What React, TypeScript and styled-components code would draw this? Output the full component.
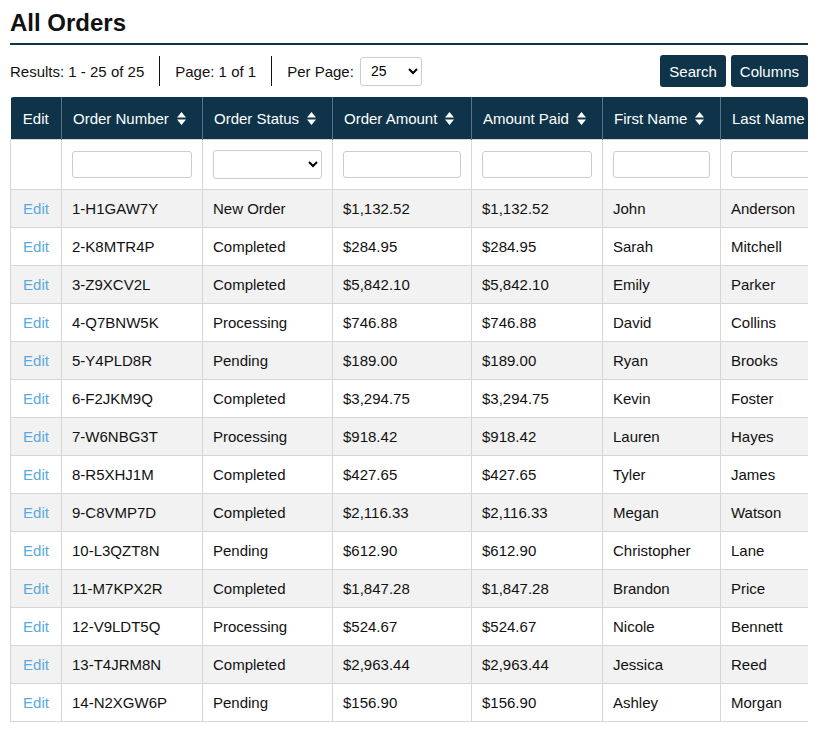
import React from 'react';
import styled, { createGlobalStyle } from 'styled-components';

const Global = createGlobalStyle`
  body { margin: 0; font-family: "Liberation Sans", Arial, sans-serif; color: #111; background: #fff; }
`;

const Page = styled.div`
  padding: 8px 10px 0;
`;

const Title = styled.h1`
  margin: 0;
  font-size: 24px;
  font-weight: 700;
  line-height: 30px;
  padding-bottom: 5px;
  border-bottom: 2px solid #0f3449;
`;

const Toolbar = styled.div`
  display: flex;
  align-items: center;
  margin-top: 10px;
  height: 32px;
`;

const Info = styled.div`
  display: flex;
  align-items: center;
  font-size: 15px;
  padding: 0 15px;
  height: 30px;
  border-left: ${p => (p.$first ? 'none' : '1px solid #111')};
  padding-left: ${p => (p.$first ? '0' : '15px')};
  gap: 6px;
`;

const PerPage = styled.select`
  width: 62px;
  height: 29px;
  border: 1px solid #ccc;
  border-radius: 3px;
  background: #fff;
  font-family: inherit;
  font-size: 14px;
  padding-left: 6px;
`;

const Spacer = styled.div`flex: 1;`;

const Button = styled.button`
  background: #0f3449;
  color: #fff;
  border: none;
  border-radius: 3px;
  height: 32px;
  padding: 0 9px;
  margin-left: 5px;
  font-family: inherit;
  font-size: 15px;
`;

const Wrap = styled.div`
  margin-top: 10px;
  height: 632px;
  overflow-x: scroll;
  overflow-y: hidden;
  border-radius: 4px 4px 0 0;
  &::-webkit-scrollbar { height: 15px; background: #f1f1f1; }
  &::-webkit-scrollbar-thumb { background: #8a8a8a; border-radius: 8px; border: 3px solid #f1f1f1; }
  &::-webkit-scrollbar-button:single-button { width: 14px; background: #f1f1f1; }
`;

const Table = styled.table`
  border-collapse: collapse;
  table-layout: fixed;
  width: 830px;
  font-size: 15px;
`;

const Th = styled.th`
  background: #0f3449;
  color: #fff;
  font-weight: 400;
  text-align: left;
  height: 42px;
  padding: 0 11px;
  white-space: nowrap;
  border-left: 1px solid #5b7282;
  &:first-child { border-left: none; text-align: center; }
`;

const Td = styled.td`
  height: 37px;
  padding: 0 10px;
  border: 1px solid #d6d6d6;
  white-space: nowrap;
`;

const FilterTd = styled(Td)`
  height: 49px;
`;

const Row = styled.tr`
  background: ${p => (p.$odd ? '#f2f2f2' : '#fff')};
`;

const Field = styled.input`
  width: 100%;
  box-sizing: border-box;
  height: 27px;
  border: 1px solid #ccc;
  border-radius: 3px;
`;

const FieldSelect = styled.select`
  width: 100%;
  height: 29px;
  border: 1px solid #ccc;
  border-radius: 3px;
  background: #fff;
`;

const EditLink = styled.a`
  color: #5aa9dd;
  display: block;
  text-align: center;
`;

const Sort = () => (
  <svg width="9" height="13" viewBox="0 0 9 13" style={{ marginLeft: 8, verticalAlign: -1 }}>
    <path d="M4.5 0L9 5.5H0Z M4.5 13L0 7.5H9Z" fill="#fff" />
  </svg>
);

const cols = ['Order Number', 'Order Status', 'Order Amount', 'Amount Paid', 'First Name', 'Last Name'];
const widths = [51, 141, 130, 139, 131, 118, 120];

const rows = [
  ['1-H1GAW7Y', 'New Order', '$1,132.52', 'John', 'Anderson'],
  ['2-K8MTR4P', 'Completed', '$284.95', 'Sarah', 'Mitchell'],
  ['3-Z9XCV2L', 'Completed', '$5,842.10', 'Emily', 'Parker'],
  ['4-Q7BNW5K', 'Processing', '$746.88', 'David', 'Collins'],
  ['5-Y4PLD8R', 'Pending', '$189.00', 'Ryan', 'Brooks'],
  ['6-F2JKM9Q', 'Completed', '$3,294.75', 'Kevin', 'Foster'],
  ['7-W6NBG3T', 'Processing', '$918.42', 'Lauren', 'Hayes'],
  ['8-R5XHJ1M', 'Completed', '$427.65', 'Tyler', 'James'],
  ['9-C8VMP7D', 'Completed', '$2,116.33', 'Megan', 'Watson'],
  ['10-L3QZT8N', 'Pending', '$612.90', 'Christopher', 'Lane'],
  ['11-M7KPX2R', 'Completed', '$1,847.28', 'Brandon', 'Price'],
  ['12-V9LDT5Q', 'Processing', '$524.67', 'Nicole', 'Bennett'],
  ['13-T4JRM8N', 'Completed', '$2,963.44', 'Jessica', 'Reed'],
  ['14-N2XGW6P', 'Pending', '$156.90', 'Ashley', 'Morgan'],
];

export default function App() {
  return (
    <Page>
      <Global />
      <Title>All Orders</Title>
      <Toolbar>
        <Info $first>Results: 1 - 25 of 25</Info>
        <Info>Page: 1 of 1</Info>
        <Info>
          Per Page:
          <PerPage defaultValue="25">
            <option>10</option>
            <option>25</option>
            <option>50</option>
          </PerPage>
        </Info>
        <Spacer />
        <Button>Search</Button>
        <Button>Columns</Button>
      </Toolbar>
      <Wrap>
        <Table>
          <colgroup>
            {widths.map((w, i) => <col key={i} style={{ width: w }} />)}
          </colgroup>
          <thead>
            <tr>
              <Th>Edit</Th>
              {cols.map(c => (
                <Th key={c}>{c}<Sort /></Th>
              ))}
            </tr>
          </thead>
          <tbody>
            <tr>
              <FilterTd />
              <FilterTd><Field /></FilterTd>
              <FilterTd><FieldSelect><option></option></FieldSelect></FilterTd>
              <FilterTd><Field /></FilterTd>
              <FilterTd><Field /></FilterTd>
              <FilterTd><Field /></FilterTd>
              <FilterTd><Field /></FilterTd>
            </tr>
            {rows.map((r, i) => (
              <Row key={r[0]} $odd={i % 2 === 0}>
                <Td style={{ padding: 0 }}><EditLink>Edit</EditLink></Td>
                <Td>{r[0]}</Td>
                <Td>{r[1]}</Td>
                <Td>{r[2]}</Td>
                <Td>{r[2]}</Td>
                <Td>{r[3]}</Td>
                <Td>{r[4]}</Td>
              </Row>
            ))}
          </tbody>
        </Table>
      </Wrap>
    </Page>
  );
}
